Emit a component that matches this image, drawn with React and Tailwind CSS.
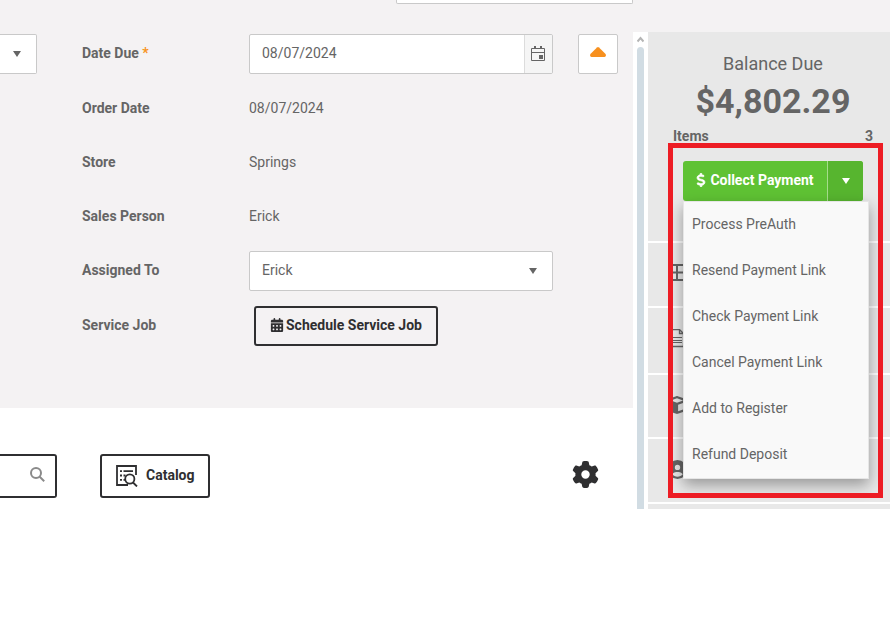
import React, { useState } from 'react';
import { FaCalendarDays, FaCube, FaDollarSign, FaGear, FaCircleUser } from 'react-icons/fa6';

const MENU_ITEMS = [
  'Process PreAuth',
  'Resend Payment Link',
  'Check Payment Link',
  'Cancel Payment Link',
  'Add to Register',
  'Refund Deposit',
];

const CaretDown = ({ className }) => (
  <svg className={className} width="8" height="6" viewBox="0 0 8 6" fill="currentColor">
    <path d="M0 0h8L4 6z" />
  </svg>
);

const TableIcon = () => (
  <svg width="18" height="19" viewBox="0 0 18 19" fill="none" stroke="currentColor" strokeWidth="2">
    <path d="M1 1h16v15H1zM1 8.5h16M9 1v15" />
  </svg>
);

const DocumentIcon = () => (
  <svg width="18" height="21" viewBox="0 0 18 21" fill="none" stroke="currentColor">
    <path d="M1.5 .5h10l4 4v13h-14zM11.5 .5v4h4" strokeWidth="1.3" />
    <path d="M4 8.5h10M4 11.5h10M4 13.5h10" strokeWidth="1" />
  </svg>
);

const CatalogIcon = () => (
  <svg width="22" height="22" viewBox="0 0 22 22" fill="none" stroke="currentColor" strokeWidth="1.8">
    <path d="M20 10V1H1v19h11M4 6.2h2M7.5 6.2H17M4 10.5h2M7.5 10.5h2M4 14.8h2M7.5 14.8H9M17 17.5l4 4" />
    <circle cx="13.8" cy="14" r="4.6" />
  </svg>
);

// hasControl lifts the label to sit level with the text inside the control
const FormRow = ({ label, htmlFor, required, hasControl, className = 'h-10', children }) => (
  <div className={`flex items-center ${className}`}>
    <label
      htmlFor={htmlFor}
      className={`w-[167px] shrink-0 font-bold ${hasControl ? 'pb-0.5' : ''}`}
    >
      {label}
      {required && <span className="text-[#f7941e]"> *</span>}
    </label>
    {children}
  </div>
);

const OrderForm = () => {
  const [dateDue, setDateDue] = useState('08/07/2024');

  return (
    <div className="flex items-start bg-[#f4f2f3] pt-0.5 pr-[15px] pb-[62px]">
      <button
        type="button"
        aria-label="Open list"
        className="flex h-10 w-[37px] shrink-0 items-center justify-end rounded-r-xs border border-l-0 border-[#c9c9c9] bg-white pr-[15px]"
      >
        <CaretDown />
      </button>

      <div className="ml-[45px] flex flex-1 flex-col gap-3.5">
        <FormRow label="Date Due" htmlFor="dateDue" required hasControl>
          <div className="flex h-10 flex-1 overflow-hidden rounded-xs border border-[#c9c9c9] bg-white">
            <input
              id="dateDue"
              type="text"
              value={dateDue}
              onChange={(e) => setDateDue(e.target.value)}
              className="min-w-0 flex-1 px-3 pb-0.5 outline-none"
            />
            <button
              type="button"
              aria-label="Pick a date"
              className="flex w-7 items-center justify-center border-l border-[#dcdcdc] bg-[#f5f5f5] pr-px"
            >
              <svg width="14" height="16" viewBox="0 0 14 16" fill="none" stroke="currentColor">
                <path d="M.5 2.5h13v12H.5zM.5 6.5h13" />
                <path d="M4 0v3M10 0v3" strokeWidth="2" />
                <path d="M8 9h4v4H8z" fill="currentColor" stroke="none" />
              </svg>
            </button>
          </div>
        </FormRow>
        <FormRow label="Order Date">
          <span>08/07/2024</span>
        </FormRow>
        <FormRow label="Store">
          <span>Springs</span>
        </FormRow>
        <FormRow label="Sales Person">
          <span>Erick</span>
        </FormRow>
        <FormRow label="Assigned To" htmlFor="assignedTo" hasControl className="py-px">
          <div className="relative flex-1">
            <select
              id="assignedTo"
              className="h-10 w-full appearance-none rounded-xs border border-[#c9c9c9] bg-white px-3 pb-0.5 outline-none"
            >
              <option>Erick</option>
            </select>
            <CaretDown className="pointer-events-none absolute top-[17px] right-4" />
          </div>
        </FormRow>
        <FormRow label="Service Job" hasControl>
          <button
            type="button"
            className="ml-[5px] flex h-10 items-center gap-0.5 rounded-[3px] border-2 border-[#2f2f31] px-3.5 pb-0.5 font-bold text-[#2f2f31]"
          >
            <FaCalendarDays size={14} />
            Schedule Service Job
          </button>
        </FormRow>
      </div>

      <button
        type="button"
        aria-label="Collapse"
        className="ml-[25px] flex h-10 w-10 shrink-0 items-center justify-center rounded-xs border border-[#c9c9c9] bg-white pb-1 text-[#f7901e]"
      >
        <svg width="16" height="10" viewBox="0 0 16 10" fill="currentColor">
          <path d="M7 .5Q8-.4 9 .5l6.6 6.6Q16.5 10 14.5 10h-13Q-.5 10 .4 7.1z" />
        </svg>
      </button>
    </div>
  );
};

const Toolbar = () => (
  <div className="flex items-center bg-white pt-[46px] pr-[34px] pb-[11px] text-[#2f2f31]">
    <button
      type="button"
      aria-label="Search"
      className="flex h-11 w-[57px] items-center justify-end rounded-r-[3px] border-2 border-l-0 border-[#2f2f31] pr-2.5 pb-1 text-[#8a8a8a]"
    >
      <svg width="15" height="15" viewBox="0 0 15 15" fill="none" stroke="currentColor" strokeWidth="2">
        <circle cx="6" cy="6" r="5" />
        <path d="M9.7 9.7l4.5 4.5" />
      </svg>
    </button>
    <button
      type="button"
      className="ml-[43px] flex h-11 items-center gap-2 rounded-[3px] border-2 border-[#2f2f31] pr-[13px] pl-3.5 font-bold"
    >
      <CatalogIcon />
      <span className="pb-0.5">Catalog</span>
    </button>
    <button type="button" aria-label="Settings" className="ml-auto pb-1">
      <FaGear size={27} />
    </button>
  </div>
);

const PaymentMenu = () => {
  const [open, setOpen] = useState(true);

  return (
    <div className="relative mx-2.5 mt-4">
      <div className="flex h-10 overflow-hidden rounded-[3px] bg-[#5fc234] font-bold text-white">
        <button type="button" className="flex flex-1 items-center justify-center gap-1 pb-0.5">
          <FaDollarSign className="-mx-0.5" size={14} stroke="currentColor" strokeWidth="24" />
          Collect Payment
        </button>
        <button
          type="button"
          aria-label="More payment actions"
          aria-expanded={open}
          onClick={() => setOpen(!open)}
          className="flex w-9 items-center justify-center border-l border-[#a5dd8c] bg-[#57b52f]"
        >
          <CaretDown />
        </button>
      </div>
      {open && (
        <ul className="absolute top-full left-0 z-10 w-[186px] border border-[#e6e6e6] bg-[#f9f9f9] shadow-[0_6px_14px_rgba(0,0,0,0.35)]">
          {MENU_ITEMS.map((item) => (
            <li key={item}>
              <button type="button" className="h-[46px] w-full px-2 pb-0.5 text-left hover:bg-gray-100">
                {item}
              </button>
            </li>
          ))}
        </ul>
      )}
      {/* Highlight around the payment actions */}
      <div className="pointer-events-none absolute -top-[18px] -left-[15px] z-20 h-[355px] w-[215px] border-5 border-[#ed1c24]" />
    </div>
  );
};

const SideRow = ({ children }) => (
  <div className="bg-[#e8e8e8] px-5 pt-[21px] pb-[23px]">{children}</div>
);

const Sidebar = () => (
  <aside className="flex w-[242px] shrink-0 flex-col gap-0.5 bg-white">
    <section className="h-[209px] bg-[#e8e8e8] pt-5 pr-[17px] pl-[25px]">
      <div className="text-center">
        <h2 className="text-lg leading-6">Balance Due</h2>
        <p className="text-[34px] leading-[51px] font-bold">$4,802.29</p>
      </div>
      <div className="flex justify-between leading-[18px] font-bold">
        <span>Items</span>
        <span>3</span>
      </div>
      <PaymentMenu />
    </section>
    <SideRow>
      <TableIcon />
    </SideRow>
    <SideRow>
      <DocumentIcon />
    </SideRow>
    <SideRow>
      <FaCube size={18} />
    </SideRow>
    <SideRow>
      <FaCircleUser size={19} />
    </SideRow>
    <div className="flex-1 bg-[#e8e8e8]" />
  </aside>
);

const App = () => (
  <div className="min-h-screen bg-white font-[Roboto,sans-serif] text-sm text-[#656565]">
    <header className="flex h-8 items-start justify-end bg-[#f4f2f3] pr-[257px]">
      <div className="h-1 w-[237px] rounded-b-xs border border-t-0 border-[#c9c9c9] bg-white" />
    </header>
    <div className="flex">
      <main className="min-w-0 flex-1">
        <OrderForm />
        <Toolbar />
      </main>
      <div className="flex w-[15px] shrink-0 flex-col items-center bg-white pt-1">
        <svg width="7" height="7" viewBox="0 0 7 7" fill="none" stroke="#b5b5b5" strokeWidth="2">
          <path d="M.5 5.5l3-3.5 3 3.5" />
        </svg>
        <div className="mt-1 w-[7px] flex-1 rounded-t-full bg-[#d1dce3]" />
      </div>
      <Sidebar />
    </div>
  </div>
);

export default App;
